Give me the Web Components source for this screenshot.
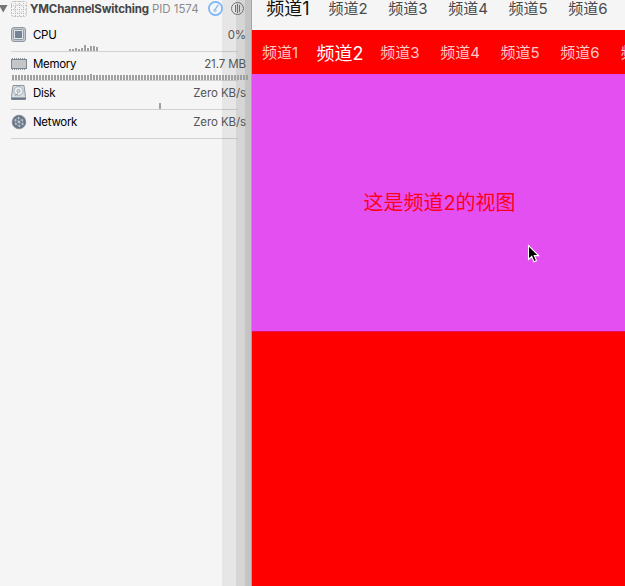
<!DOCTYPE html>
<html lang="zh">
<head>
<meta charset="utf-8">
<title>YMChannelSwitching</title>
<style>
html,body{margin:0;height:100%;overflow:hidden}
body{font-family:Inter,"Noto Sans CJK SC",sans-serif;background:#f5f5f5}
</style>
</head>
<body>
<app-window></app-window>
<script>
const define = (name, html, setup) => customElements.define(name, class extends HTMLElement {
  connectedCallback() {
    if (this.shadowRoot) return;
    const t = document.createElement('template');
    t.innerHTML = html;
    this.attachShadow({mode: 'open'}).append(t.content.cloneNode(true));
    if (setup) setup(this, this.shadowRoot);
  }
});

const icons = {
  cpu: '<rect x=".5" y=".5" width="14" height="14" rx="2.5" fill="#c3cad1" stroke="#8d969f"/><rect x="2.5" y="2.5" width="10" height="10" rx="1" fill="#dfe3e6" stroke="#8f9aa6"/><rect x="4" y="4" width="7" height="7" fill="#748393"/>',
  memory: '<path d="M1 3h14M1 13h14" stroke="#65717d" stroke-width="1.6" stroke-dasharray="1 1"/><rect x=".5" y="3.5" width="15" height="9" fill="#c3c5c7" stroke="#7e8994"/>',
  disk: '<path d="M2 .5h11l1.5 11v3H.5v-3z" fill="#d8dde1" stroke="#8c969f"/><path d="M.5 12.5h14v2H.5z" fill="#667789"/><ellipse cx="7.5" cy="6" rx="4.6" ry="4.3" fill="#eef0f1" stroke="#a4adb5"/><circle cx="7.5" cy="6" r="1.6" fill="#dce0e3" stroke="#909ba5" stroke-width=".8"/><path d="M4 10.5l3-2" stroke="#8995a0"/>',
  network: '<circle cx="8" cy="8" r="6.8" fill="#667486" stroke="#8a939e"/><path d="M4 6l3.5-2.5 4 2.5.5 4-3.5 2.5-4-2.5zM4 6l8 4M7.5 3.5l1 9M11.5 6l-7 4" fill="none" stroke="#b4bdc6" stroke-width=".7"/><g fill="#d0d7dd"><circle cx="4.2" cy="6.1" r=".8"/><circle cx="7.5" cy="3.7" r=".8"/><circle cx="11.5" cy="6" r=".8"/><circle cx="11.8" cy="10.2" r=".8"/><circle cx="8.3" cy="12.2" r=".8"/><circle cx="4.7" cy="10" r=".8"/><circle cx="7.9" cy="7.7" r=".9"/></g>'
};

define('process-header', `<style>
:host{display:flex;height:23px;align-items:flex-start;color:#444;font-size:11.5px;line-height:19px;white-space:nowrap}
svg{display:block;flex:none}
.name{font-weight:700;width:122px;margin-left:3px;letter-spacing:-.16px}
.pid{color:#8c8c8c;width:55px;letter-spacing:-.05px}
</style>
<svg width="27" height="18" viewBox="0 0 27 18"><path d="M-1 5h8.5L3.2 12.5z" fill="#747474"/>
<g fill="none" stroke="#bdbdbd"><rect x="11.5" y="1.5" width="15" height="15" rx="2" stroke-dasharray="2 1"/><path stroke-dasharray="1 1" d="M15.5 1v16M19.5 1v16M23.5 1v16M11 5.5h16M11 9.5h16M11 13.5h16"/><circle cx="19" cy="9" r="4.5" stroke-dasharray="1 1"/></g></svg>
<span class="name">YMChannelSwitching</span><span class="pid">PID 1574</span>
<svg width="42" height="18" viewBox="207 0 42 18" fill="none"><circle cx="215.5" cy="8.5" r="6.6" stroke="#7bb5fa" stroke-width="1.7"/><path d="M218.3 4.8l-2.8 4" stroke="#7bb5fa" stroke-width="1.2"/><circle cx="215" cy="10.3" r="1.1" stroke="#7bb5fa"/><circle cx="237.5" cy="8.5" r="6" stroke="#707070"/><path d="M235.5 5v7M237.5 4v9M239.5 5v7" stroke="#707070"/></svg>`);

define('gauge-row', `<style>
:host{display:flex;flex-direction:column;height:29px;font-size:11.5px}
.line{display:flex;height:23px;padding-left:11px;width:235px;align-items:center}
.icon{width:16px;height:16px;flex:none;margin-right:6px}
.name,.value{line-height:14px}
.name{color:#000;flex:1;letter-spacing:-.3px}.value{color:#555;white-space:nowrap;letter-spacing:-.1px}
.chart{display:block;width:252px;height:8px;margin-top:-2px;flex:none}
</style>
<div class="line"><svg class="icon" viewBox="0 0 16 16"></svg><span class="name"><slot></slot></span><span class="value"></span></div>
<svg class="chart" viewBox="0 0 252 8" shape-rendering="crispEdges"></svg>`, (el, root) => {
  root.querySelector('.icon').innerHTML = icons[el.getAttribute('icon')];
  root.querySelector('.value').textContent = el.getAttribute('value');
  let bars = '<path d="M11 7.5h211" stroke="#d2d2d2"/><path d="M222 7.5h16" stroke="#c3c3c3"/>';
  const start = +el.getAttribute('start');
  const full = el.hasAttribute('full');
  const heights = full ? Array.from({length: 79}, (_, i) => i === 26 ? 6 : 5)
    : (el.getAttribute('bars') || '').split(' ').filter(Boolean).map(Number);
  heights.forEach((h, i) => { bars += `<rect x="${start + i * 3}" y="${7 - h}" width="2" height="${h}" fill="#a0a0a0"/>`; });
  root.querySelector('.chart').innerHTML = bars;
});

define('debug-navigator', `<style>
:host{display:flex;flex-direction:column;width:251px;flex:none;border-right:1px solid #a5a5a5;overflow:hidden;
background:linear-gradient(to right,#f5f5f5 222px,#e6e6e6 222px 236px,#d5d5d5 236px 245px,#c4c4c4 245px)}
</style>
<process-header></process-header>
<gauge-row icon="cpu" value="0%" start="69" bars="2 2 3 2 3 6 3 5 5 4">CPU</gauge-row>
<gauge-row icon="memory" value="21.7 MB" start="12" full>Memory</gauge-row>
<gauge-row icon="disk" value="Zero KB/s" start="159" bars="6">Disk</gauge-row>
<gauge-row icon="network" value="Zero KB/s">Network</gauge-row>`);

define('channel-tab', `<style>
:host{display:flex;justify-content:center;align-items:center;flex:0 0 60px;font-size:15px;white-space:nowrap}
:host([selected]){font-size:18px;color:var(--on)}
</style><slot></slot>`);

define('channel-bar', `<style>
:host{display:flex;overflow:hidden;flex:none;box-sizing:border-box}
</style>`, (el, root) => {
  for (let i = 1; i <= +el.getAttribute('count'); i++) {
    const tab = document.createElement('channel-tab');
    tab.textContent = '频道' + i;
    if (i === +el.getAttribute('current')) tab.setAttribute('selected', '');
    root.append(tab);
  }
});

define('phone-screen', `<style>
:host{display:flex;flex-direction:column;flex:1;min-width:0;background:#f00;overflow:hidden}
.top{height:30px;background:#f5f5f5;color:#4a4a4a;--on:#111;padding:0 0 16px 6px}
.sub{height:44px;background:#f00;color:#ffc8c8;--on:#fff;padding-bottom:1px;margin-left:-2px}
.view{display:flex;height:257px;align-items:center;justify-content:center;background:#e34ff1;color:#ff0019;font-size:20px;border-bottom:1px solid #e5105c}
.view span{padding:0 0 2px 2px}
</style>
<channel-bar class="top" count="6" current="1"></channel-bar>
<channel-bar class="sub" count="7" current="2"></channel-bar>
<div class="view"><span>这是频道2的视图</span></div>`);

define('mouse-pointer', `<style>
:host{position:absolute;left:527px;top:244px}svg{display:block}
</style><svg width="14" height="20" viewBox="0 0 14 20"><path d="M1.5 1.5v14l3.2-3 2.3 5.2 2.5-1.1-2.2-5h4.3z" fill="#000" stroke="#fff" stroke-width="1.1"/></svg>`);

define('app-window', `<style>
:host{display:flex;height:586px;width:625px;position:relative;overflow:hidden}
</style>
<debug-navigator></debug-navigator><phone-screen></phone-screen><mouse-pointer></mouse-pointer>`);
</script>
</body>
</html>
